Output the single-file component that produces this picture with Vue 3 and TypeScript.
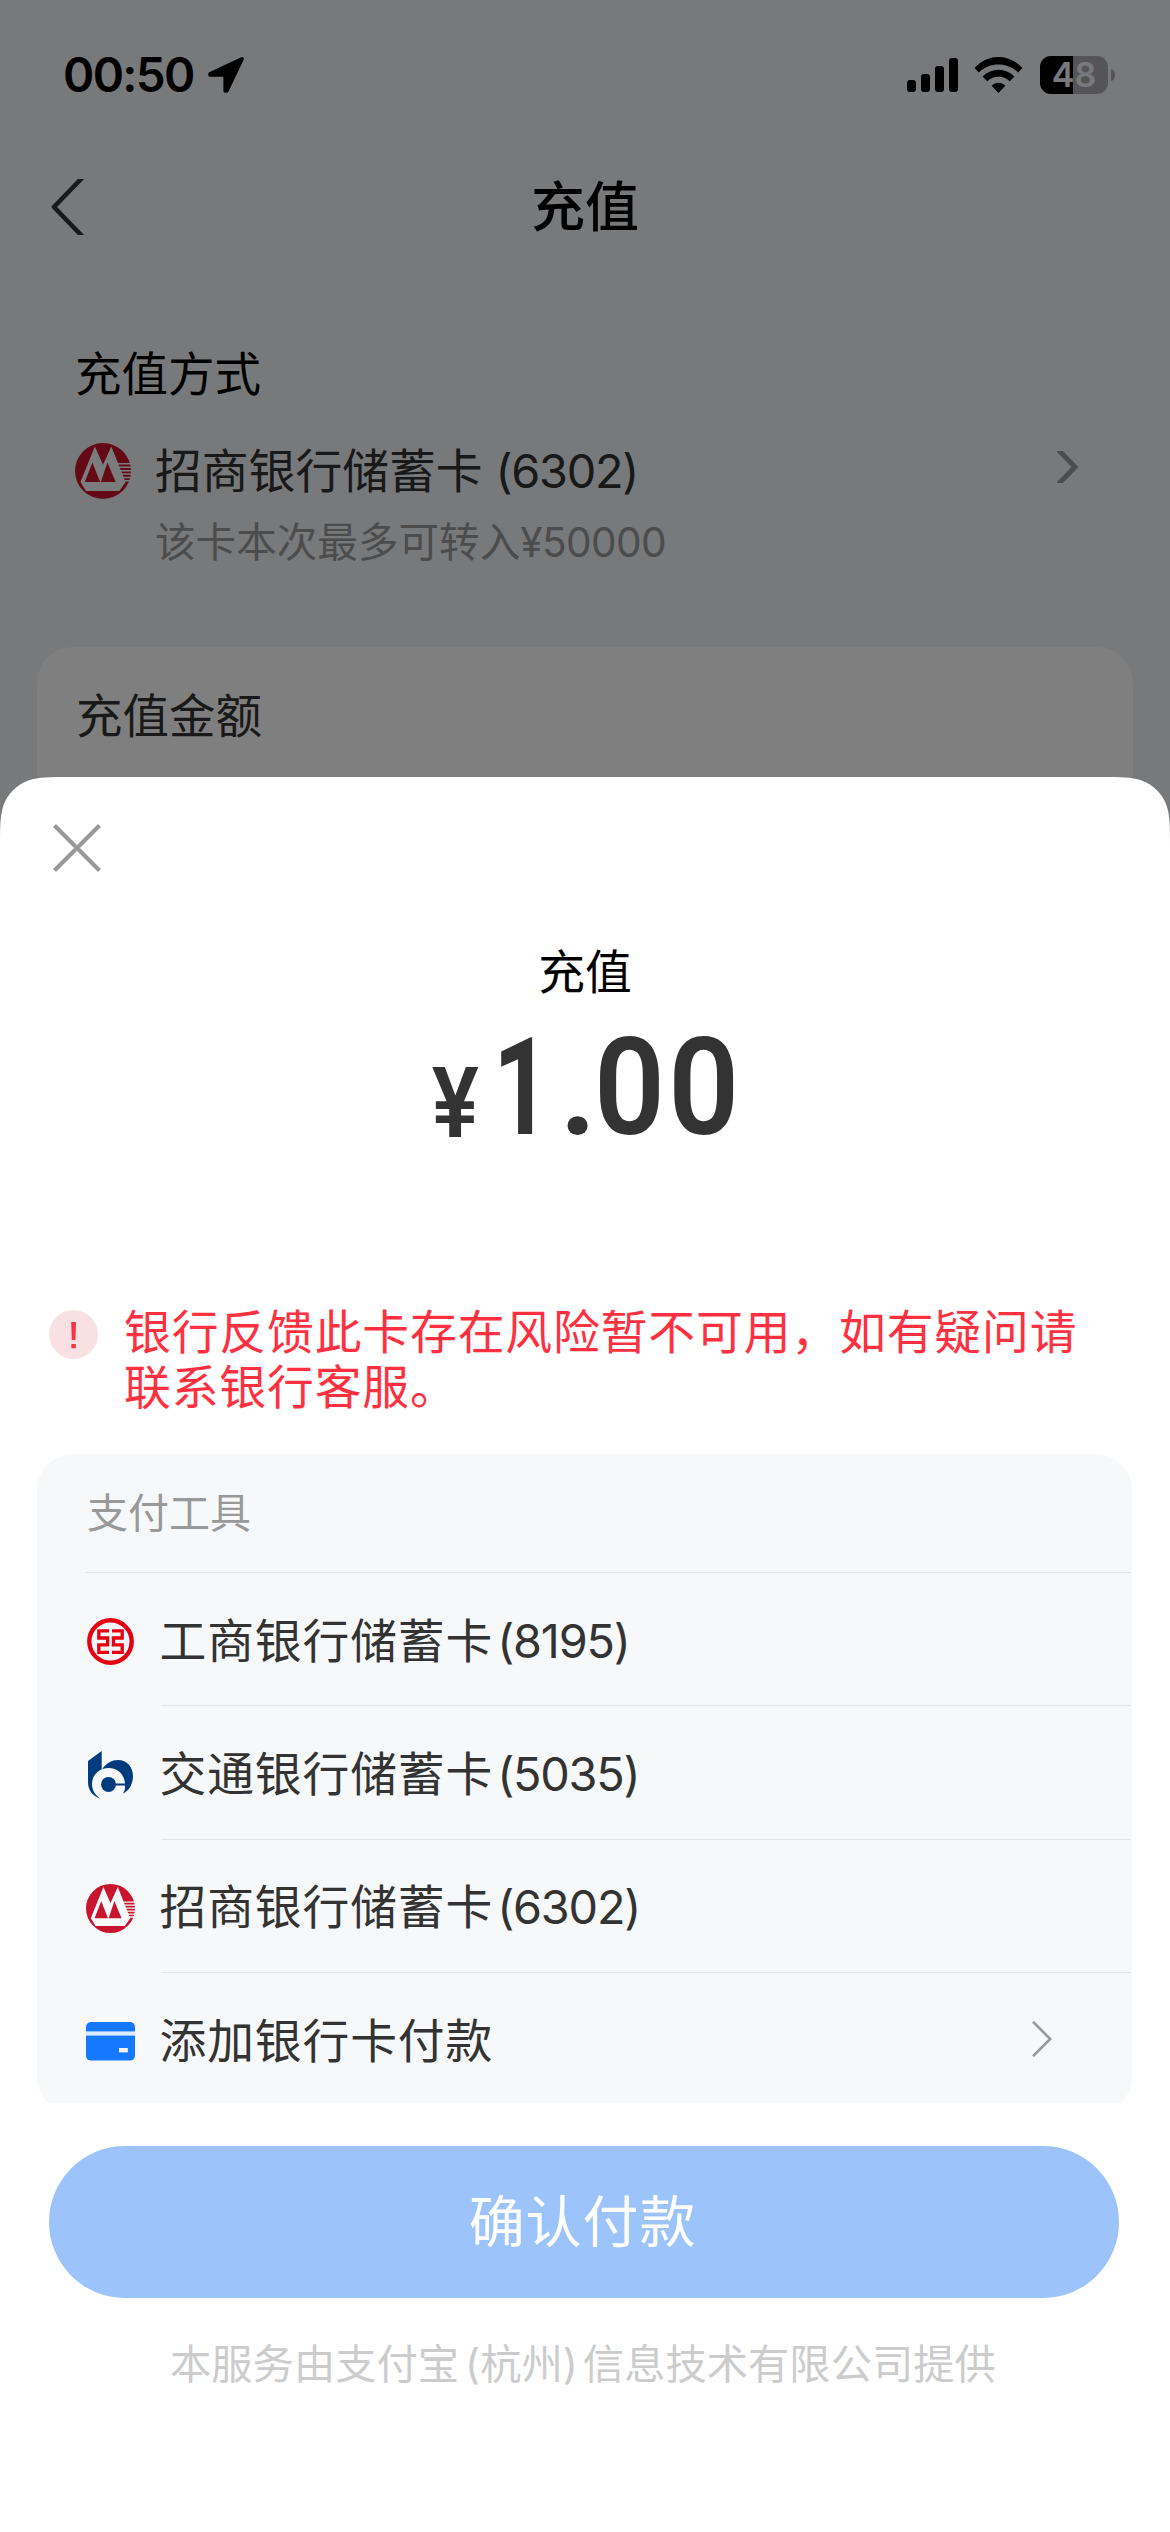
<script setup lang="ts">
interface Tool {
  id: string
  logo: 'icbc' | 'bocom' | 'cmb' | 'card'
  name: string
  tail?: string
}

const tools: Tool[] = [
  { id: 'icbc', logo: 'icbc', name: '工商银行储蓄卡', tail: '(8195)' },
  { id: 'bocom', logo: 'bocom', name: '交通银行储蓄卡', tail: '(5035)' },
  { id: 'cmb', logo: 'cmb', name: '招商银行储蓄卡', tail: '(6302)' },
  { id: 'add', logo: 'card', name: '添加银行卡付款' },
]

const signalBars = [12, 18, 26, 34]
</script>

<template>
  <div class="screen">
    <svg class="defs" width="0" height="0" aria-hidden="true">
      <symbol id="logo-cmb" viewBox="0 0 49 49">
        <circle cx="24.5" cy="24.5" r="24.5" fill="#c8152d" />
        <path d="M17.4 3 24.5 19 31.8 3 44.2 34.2 38.8 42H9.6L4.8 34.2Z" fill="#f7f8fa" />
        <path d="M15.2 17 22 34.2H8.6ZM28.4 17 35.6 34.2H22.6Z" fill="#c8152d" />
        <path
          d="M37.4 18.2H49M38.3 21.2H49M39.3 24.2H49M40.4 27.2H49M41.5 30.2H49M42.6 33H49"
          stroke="#f7f8fa"
          stroke-width="1.3"
        />
      </symbol>
    </svg>

    <div class="page">
      <header class="status">
        <span class="time">00:50</span>
        <svg class="arrow" width="36" height="36" viewBox="0 0 36 36">
          <path d="M34 2 2 17V18H17.2V34H18.8Z" stroke="#000" stroke-width="3.6" stroke-linejoin="round" />
        </svg>
        <span class="signal">
          <i v-for="h in signalBars" :key="h" :style="{ height: h + 'px' }"></i>
        </span>
        <svg class="wifi" width="49" height="36" viewBox="0 0 49 36">
          <path d="M.6 11C14-3.7 35-3.7 48.4 11L44.2 15.4C33 4.9 16 4.9 4.8 15.4Z" />
          <path d="M8.6 19.4C17.6 10.6 31.4 10.6 40.4 19.4L35.8 24.2C29.4 18.4 19.6 18.4 13.2 24.2Z" />
          <path d="M17.6 28.8C21.4 24.6 27.6 24.6 31.4 28.8L24.5 36Z" />
        </svg>
        <span class="battery"><b>48</b></span>
        <i class="nub"></i>
      </header>

      <nav class="nav">
        <svg class="back" width="34" height="56" viewBox="0 0 34 56">
          <path d="M31.5-1.5 3 28 31.5 57.5" fill="none" stroke="#333" stroke-width="4.6" stroke-linejoin="round" />
        </svg>
        <h1>充值</h1>
      </nav>

      <section class="method">
        <h2>充值方式</h2>
        <div class="method-row">
          <svg class="method-logo" width="56" height="56"><use href="#logo-cmb" /></svg>
          <span>招商银行储蓄卡</span><span class="method-tail">(6302)</span>
          <svg class="method-go" width="21" height="32" viewBox="0 0 21 32">
            <path d="M1-1.5 18 16 1 33.5" fill="none" stroke="#999" stroke-width="5" />
          </svg>
        </div>
        <p>该卡本次最多可转入<span class="limit">¥50000</span></p>
      </section>

      <section class="amount-card"><h2>充值金额</h2></section>
    </div>

    <div class="mask"></div>

    <main class="sheet">
      <svg class="close" width="48" height="48" viewBox="0 0 48 48">
        <path d="M1.5 1.5 46.5 46.5M46.5 1.5 1.5 46.5" stroke="#999" stroke-width="4.2" />
      </svg>
      <h2 class="subject">充值</h2>
      <div class="amount">
        <span class="yen">¥</span><span class="int">1</span><span class="dot">.</span><span class="dec">00</span>
      </div>

      <div class="alert">
        <svg width="49" height="49" viewBox="0 0 49 49">
          <circle cx="24.5" cy="24.5" r="24.5" fill="#f9e1e3" />
          <path d="M22.2 12H27L26.4 30H22.8ZM22.4 34H26.8V38.2H22.4Z" fill="#f93340" />
        </svg>
        <p>银行反馈此卡存在风险暂不可用，如有疑问请联系银行客服。</p>
      </div>

      <div class="panel-clip">
        <section class="panel">
          <h3>支付工具</h3>
          <ul>
            <li v-for="tool in tools" :key="tool.id">
              <span class="logo">
                <svg v-if="tool.logo === 'icbc'" width="47" height="47" viewBox="0 0 47 47">
                  <g fill="none" stroke="#e60012">
                    <circle cx="23.5" cy="23.5" r="21.2" stroke-width="4.4" />
                    <path
                      d="M22 12.8H11.8V20H20.6V26.8H11.8V34.4H22M25 12.8H35.2V20H26.4V26.8H35.2V34.4H25"
                      stroke-width="3.3"
                    />
                  </g>
                </svg>
                <svg v-else-if="tool.logo === 'bocom'" width="45" height="48" viewBox="0 0 45 48">
                  <path
                    d="M0 10 13.7 0V19C18 12 24 9 30 9 39 9 45 16 45 25 45 33 41 40 35 42.5 37 39 37.5 37 36.8 34.5H27V32.4H37C36 22 29 17 20.5 17 11 17 4 24 4 33 4 39 7 44 12.5 47.8 4 45 0 39 0 31Z"
                    fill="#003c7d"
                  />
                  <circle cx="20.5" cy="33.4" r="7.5" fill="#003c7d" />
                </svg>
                <svg v-else-if="tool.logo === 'cmb'" width="49" height="49"><use href="#logo-cmb" /></svg>
                <svg v-else width="49" height="39" viewBox="0 0 49 39">
                  <rect width="49" height="38.6" rx="5" fill="#1677ff" />
                  <rect y="9.4" width="49" height="4.2" fill="#dcebff" />
                  <rect x="33" y="26" width="8.8" height="4.4" fill="#f7f8fa" />
                </svg>
              </span>
              <div class="label">
                <span class="name">{{ tool.name }}</span><span v-if="tool.tail" class="tail">{{ tool.tail }}</span>
                <svg v-else class="go" width="20" height="36" viewBox="0 0 20 36">
                  <path d="M1 .8 18.2 18 1 35.2" fill="none" stroke="#999" stroke-width="2.6" />
                </svg>
              </div>
            </li>
          </ul>
        </section>
      </div>

      <button class="confirm" type="button">确认付款</button>
      <p class="provider">本服务由支付宝<span class="open">(</span>杭州<span class="shut">)</span>信息技术有限公司提供</p>
    </main>
  </div>
</template>

<style>
body {
  margin: 0;
}
</style>

<style scoped>
.screen {
  position: relative;
  width: 1170px;
  height: 2532px;
  overflow: hidden;
  background: #f0f2f6;
  color: #333;
  font-family: Inter, 'Noto Sans CJK SC', sans-serif;
  font-size: 46.8px;
  line-height: 66px;
}
.defs {
  position: absolute;
}
h1, h2, h3, p, ul {
  margin: 0;
  padding: 0;
  font-weight: 400;
  font-size: inherit;
  list-style: none;
}
svg {
  display: block;
  flex: none;
}
.mask {
  position: absolute;
  inset: 0;
  background: rgba(0, 0, 0, 0.5);
}

/* Status bar */
.status {
  display: flex;
  align-items: center;
  box-sizing: border-box;
  height: 149px;
  padding: 0 55px 0 63px;
  color: #000;
}
.time {
  width: 145px;
  font-size: 47.5px;
  font-weight: 600;
  letter-spacing: -1.7px;
  white-space: nowrap;
}
.signal {
  display: flex;
  align-items: flex-end;
  gap: 4px;
  height: 34px;
  margin-left: auto;
}
.signal i {
  width: 9px;
  margin-left: 1px;
  border-radius: 3px;
  background: #000;
}
.wifi {
  margin: 0 17px 0 16px;
}
.battery {
  width: 68px;
  height: 38px;
  border-radius: 11px;
  background: linear-gradient(90deg, #000 33px, #aaabae 33px);
  color: #f0f2f6;
  font-size: 34px;
  line-height: 38px;
  text-align: center;
}
.battery b {
  font-weight: 600;
}
.nub {
  width: 4px;
  height: 12px;
  margin-left: 3px;
  border-radius: 0 4px 4px 0 / 0 6px 6px 0;
  background: #aaabae;
}

/* Navigation */
.nav {
  display: grid;
  grid-template-columns: 200px 1fr 200px;
  align-items: center;
  height: 116px;
}
.back {
  margin-left: 51px;
}
.nav h1 {
  padding-top: 2px;
  color: #000;
  font-size: 54px;
  font-weight: 500;
  text-align: center;
}

/* Dimmed page */
.method {
  padding: 76px 92px 0 75px;
}
.method h2 {
  color: #000;
}
.method h2,
.amount-card h2 {
  font-size: 46.5px;
}
.method-row {
  display: flex;
  align-items: center;
  margin-top: 31px;
}
.method-logo {
  margin-right: 24px;
}
.method-tail {
  margin-left: 13px;
  letter-spacing: -1.3px;
}
.method-go {
  margin: -8px 0 0 auto;
}
.method p {
  margin-top: 11px;
  padding-left: 80px;
  color: #999;
  font-size: 40.6px;
  line-height: 56px;
}
.limit {
  letter-spacing: -0.6px;
}
.amount-card {
  height: 300px;
  margin: 76px 37px 0;
  padding: 36px 39px 0;
  border-radius: 36px;
  background: #fff;
  box-sizing: border-box;
}

/* Payment sheet */
.sheet {
  position: absolute;
  top: 777px;
  left: 0;
  box-sizing: border-box;
  width: 1170px;
  height: 1755px;
  padding-top: 47px;
  background: #fff;
  clip-path: path('M0 68.8C0 49 0 39.1 3.4 28.4C7.6 16.8 16.8 7.6 28.4 3.4C39.1 0 49 0 68.8 0H1101.2C1121 0 1130.9 0 1141.6 3.4C1153.2 7.6 1162.4 16.8 1166.6 28.4C1170 39.1 1170 49 1170 68.8V1755H0Z');
}
.close {
  margin-left: 53px;
}
.subject {
  margin-top: 67px;
  color: #000;
  text-align: center;
}
.amount {
  display: flex;
  height: 130px;
  margin-top: 18px;
  padding-left: 429px;
  font-family: Roboto, sans-serif;
  font-size: 135px;
  font-weight: 600;
  line-height: 130px;
}
.yen {
  width: 53px;
  font-size: 98px;
  line-height: 162px;
  transform: scaleX(0.9);
}
.int {
  width: 60px;
  margin-left: 11px;
  font-weight: 700;
  transform: scaleX(0.74);
  transform-origin: left;
}
.dot {
  width: 35px;
  margin-left: 6px;
}
.dec {
  letter-spacing: 3.5px;
  transform: scaleX(0.92);
  transform-origin: left;
}

.alert {
  display: flex;
  align-items: flex-start;
  margin: 152px 49px 0;
  color: #ff3141;
}
.alert svg {
  margin-top: 5px;
}
.alert p {
  width: 965px;
  margin-left: 26px;
  letter-spacing: 0.87px;
  line-height: 55px;
}

.panel-clip {
  height: 649px;
  margin: 39px 38px 0 37px;
  overflow: hidden;
}
.panel {
  height: 659px;
  border-radius: 36px;
  background: #f7f8fa;
}
.panel h3 {
  height: 118px;
  padding-left: 50px;
  color: #999;
  font-size: 41px;
  line-height: 118px;
}
.panel ul {
  margin: 0 1px 0 49px;
  border-top: 1px solid #e1e3e6;
}
.panel li {
  display: flex;
  height: 133.33px;
}
.logo {
  display: flex;
  align-items: center;
  justify-content: center;
  width: 49px;
  height: 137px;
  margin-right: 26px;
}
.label {
  display: flex;
  flex: 1;
  align-items: center;
  box-sizing: border-box;
  padding-top: 3px;
  border-bottom: 1px solid #e1e3e6;
}
.name {
  margin-left: -1.5px;
  letter-spacing: 0.87px;
}
.tail {
  margin-left: 4px;
  letter-spacing: -1.2px;
}
.panel li:last-child .label {
  border-bottom: 0;
}
.go {
  margin: -5px 79px 0 auto;
}

.confirm {
  display: block;
  width: 1070px;
  height: 152px;
  margin: 43px 0 0 49px;
  padding: 0;
  border: 0;
  border-radius: 76px;
  background: #9cc3fa;
  color: #fff;
  font: 56px/148px Inter, 'Noto Sans CJK SC', sans-serif;
  letter-spacing: 0.9px;
  text-indent: -3px;
}
.provider {
  margin-top: 38px;
  padding-left: 170px;
  color: #ccc;
  font-size: 41.3px;
  line-height: 56px;
  white-space: nowrap;
}
.open {
  margin-left: 6px;
}
.shut {
  margin-right: 5px;
}
</style>
